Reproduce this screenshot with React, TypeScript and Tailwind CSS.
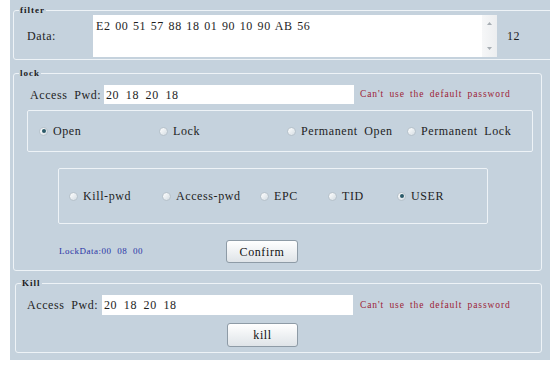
const serif = "font-[family-name:'Liberation_Serif',serif]";

function Radio({ label, checked, className }: { label: string; checked?: boolean; className?: string }) {
  return (
    <label className={`flex items-center gap-[5px] ${className ?? ''}`}>
      <span className="flex h-[9px] w-[9px] items-center justify-center rounded-full border border-[#b7c2cb] bg-gradient-to-br from-white to-[#d5dde3]">
        {checked && <span className="h-[4px] w-[4px] rounded-full bg-[#2b5a68]" />}
      </span>
      <span>{label}</span>
    </label>
  );
}

function Group({ title, className, children }: { title: string; className?: string; children: React.ReactNode }) {
  return (
    <fieldset className={`rounded-[3px] border border-[#eef3f7] ${className ?? ''}`}>
      <legend className="ml-[5px] px-[1px] text-[9px] font-bold leading-[10px] tracking-[1px] text-[#1b1b1b]">{title}</legend>
      {children}
    </fieldset>
  );
}

function Button({ label, className }: { label: string; className?: string }) {
  return (
    <button className={`rounded-[3px] border border-[#8e9ba6] bg-gradient-to-b from-white to-[#dfe4e8] text-[12px] tracking-[0.6px] text-[#111] ${className ?? ''}`}>
      {label}
    </button>
  );
}

function Warning({ className }: { className?: string }) {
  return (
    <span className={`text-[9.5px] tracking-[0.9px] [word-spacing:2px] text-[#9c2236] ${className ?? ''}`}>
      Can't use the default password
    </span>
  );
}

export default function App() {
  return (
    <div className={`min-h-[367px] bg-white ${serif}`}>
      <div className="ml-[10px] h-[360px] w-[540px] overflow-hidden bg-[#c5d2dd] pt-[5px] text-[12px] tracking-[0.6px] [word-spacing:3px] text-[#1e1e1e]">
        <Group title="filter" className="ml-[3px] w-[545px] pb-[2px]">
          <div className="flex items-center">
            <span className="w-[79px] pl-[13px]">Data:</span>
            <div className="flex h-[42px] w-[404px] bg-white">
              <div className="flex-1 pl-[3px] pt-[4px] leading-[14px] [word-spacing:1px]">E2 00 51 57 88 18 01 90 10 90 AB 56</div>
              <div className="flex w-[15px] flex-col items-center justify-between bg-gradient-to-r from-[#f6f7f8] to-[#eceef0] py-[7px]">
                <svg width="5" height="3" viewBox="0 0 5 3"><path d="M0 3 L2.5 0 L5 3 Z" fill="#a7adb3" /></svg>
                <svg width="5" height="3" viewBox="0 0 5 3"><path d="M0 0 L2.5 3 L5 0 Z" fill="#a7adb3" /></svg>
              </div>
            </div>
            <span className="ml-[10px]">12</span>
          </div>
        </Group>

        <Group title="lock" className="ml-[3px] mt-[8px] w-[529px] pb-[7px]">
          <div className="flex items-center pl-[16px] pt-[7px]">
            <span className="w-[74px]">Access Pwd:</span>
            <div className="flex h-[19px] w-[250px] items-center bg-white pl-[2px]">20 18 20 18</div>
            <Warning className="ml-[6px]" />
          </div>
          <div className="ml-[13px] mt-[6px] flex h-[42px] w-[506px] items-center rounded-[2px] border border-[#eef3f7] pl-[11px]">
            <Radio label="Open" checked className="w-[120px]" />
            <Radio label="Lock" className="w-[128px]" />
            <Radio label="Permanent Open" className="w-[120px]" />
            <Radio label="Permanent Lock" />
          </div>
          <div className="ml-[44px] mt-[16px] flex h-[56px] w-[430px] items-center rounded-[2px] border border-[#eef3f7] pl-[10px]">
            <Radio label="Kill-pwd" className="w-[93px]" />
            <Radio label="Access-pwd" className="w-[98px]" />
            <Radio label="EPC" className="w-[68px]" />
            <Radio label="TID" className="w-[69px]" />
            <Radio label="USER" checked />
          </div>
          <div className="ml-[45px] mt-[16px] flex items-center">
            <span className="w-[167px] text-[9px] tracking-[0.5px] text-[#2b35a6]">LockData:00 08 00</span>
            <Button label="Confirm" className="h-[23px] w-[72px]" />
          </div>
        </Group>

        <Group title="Kill" className="ml-[5px] mt-[7px] w-[527px] pb-[5px]">
          <div className="flex items-center pl-[11px] pt-[7px]">
            <span className="w-[75px]">Access Pwd:</span>
            <div className="flex h-[20px] w-[251px] items-center bg-white pl-[2px]">20 18 20 18</div>
            <Warning className="ml-[7px]" />
          </div>
          <Button label="kill" className="ml-[211px] mt-[8px] h-[24px] w-[71px]" />
        </Group>
      </div>
    </div>
  );
}
